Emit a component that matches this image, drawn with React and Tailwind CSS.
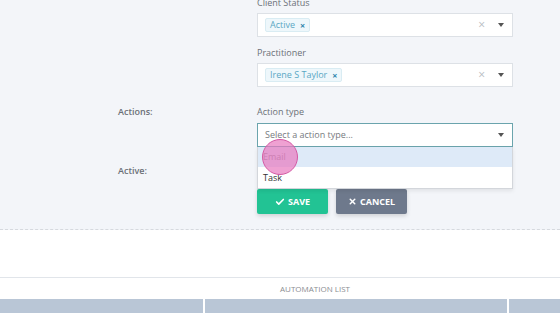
import { Check, X } from "lucide-react";

function Tag({ label }) {
  return (
    <span className="flex h-[14px] items-center gap-[5px] rounded-[2px] border border-[#d9ecf3] bg-[#eef7fb] px-[4px] text-[9px] text-[#5aa7c4]">
      {label}
      <span className="text-[9px] font-bold leading-none text-[#2f86ad]">×</span>
    </span>
  );
}

function Caret({ className = "" }) {
  return <span className={`block h-0 w-0 border-x-[3.5px] border-t-[4px] border-x-transparent border-t-[#555] ${className}`} />;
}

function MultiSelect({ value }) {
  return (
    <div className="flex h-[24px] w-[256px] items-center border border-[#dde1e6] bg-white pl-[7px] pr-[8px]">
      <Tag label={value} />
      <span className="ml-auto mr-[13px] text-[12px] leading-none text-[#b8bcc2]">×</span>
      <Caret />
    </div>
  );
}

function Label({ children, className = "" }) {
  return <p className={`h-[14px] text-[9px] leading-[14px] text-[#6b7077] ${className}`}>{children}</p>;
}

export default function App() {
  return (
    <div className="h-[313px] w-[560px] overflow-hidden bg-[#f3f5f9] font-['Open_Sans',sans-serif]">
      <div className="border-b border-dashed border-[#d6d9de] pb-[15px] pl-[118px]">
        <div className="ml-[139px] -mt-[4px]">
          <Label className="mb-[3px]">Client Status</Label>
          <MultiSelect value="Active" />
          <Label className="mb-[3px] mt-[9px]">Practitioner</Label>
          <MultiSelect value="Irene S Taylor" />
        </div>

        <div className="mt-[18px] flex">
          <p className="w-[139px] text-[9px] font-semibold leading-[14px] text-[#6b7077]">Actions:</p>
          <div className="relative">
            <Label className="mb-[4px]">Action type</Label>
            <div className="flex h-[24px] w-[256px] items-center border border-[#6aa4ad] bg-white pl-[7px] pr-[8px]">
              <span className="text-[9px] text-[#777b80]">Select a action type...</span>
              <Caret className="ml-auto" />
            </div>
            <div className="absolute left-0 top-[42px] z-10 w-[256px] border border-t-0 border-[#d3d6db] bg-white shadow-[0_2px_4px_rgba(0,0,0,0.08)]">
              <div className="flex h-[20px] items-center bg-[#deeaf8] pl-[5px] text-[9px] text-[#8a8d92]">Email</div>
              <div className="flex h-[21px] items-center pl-[5px] text-[9px] text-[#333]">Task</div>
              <span className="absolute left-[4px] top-[-8px] h-[36px] w-[36px] rounded-full border border-[#d45aa4] bg-[#e879bf]/70" />
            </div>
          </div>
        </div>

        <div className="mt-[13px] flex h-[22px] items-center">
          <p className="w-[139px] text-[9px] font-semibold text-[#6b7077]">Active:</p>
          <span className="h-[12px] w-[22px] rounded-full border border-[#ccc] bg-white" />
        </div>

        <div className="ml-[139px] mt-[7px] flex gap-[8px]">
          <button className="flex h-[25px] w-[71px] items-center justify-center gap-[3px] rounded-[2px] bg-[#22c394] text-[9px] font-bold text-white shadow-[0_2px_4px_rgba(0,0,0,0.15)]">
            <Check size={10} strokeWidth={4} />
            SAVE
          </button>
          <button className="flex h-[25px] w-[71px] items-center justify-center gap-[3px] rounded-[2px] bg-[#6e798c] text-[9px] font-bold text-white shadow-[0_2px_4px_rgba(0,0,0,0.15)]">
            <X size={9} strokeWidth={4} />
            CANCEL
          </button>
        </div>
      </div>

      <div className="h-[48px] border-b border-[#e1e5ea] bg-white" />
      <div className="flex h-[21px] items-center justify-center bg-white pl-[70px] text-[8px] text-[#8a8d92]">
        AUTOMATION LIST
      </div>
      <div className="flex h-[20px] gap-[2px] bg-white">
        <div className="w-[203px] bg-[#b9c6d6]" />
        <div className="w-[302px] bg-[#b9c6d6]" />
        <div className="flex-1 bg-[#b9c6d6]" />
      </div>
    </div>
  );
}
